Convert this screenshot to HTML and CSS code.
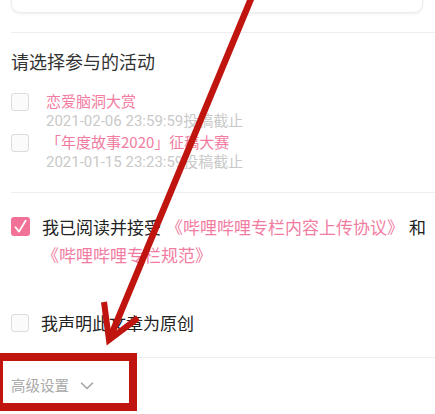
FILE: index.html
```html
<!DOCTYPE html>
<html lang="zh-CN">
<head>
<meta charset="utf-8">
<title>选择活动</title>
<link rel="stylesheet" href="styles.css">
</head>
<body>
<div class="page">
  <div class="card"></div>
  <div class="divider"></div>
  <div class="section-title">请选择参与的活动</div>
  <div class="activities">
    <div class="activity">
      <span class="box"></span>
      <div class="activity-text">
        <div class="activity-name">恋爱脑洞大赏</div>
        <div class="activity-date">2021-02-06 23:59:59投稿截止</div>
      </div>
    </div>
    <div class="activity">
      <span class="box"></span>
      <div class="activity-text">
        <div class="activity-name">「年度故事2020」征稿大赛</div>
        <div class="activity-date">2021-01-15 23:23:59投稿截止</div>
      </div>
    </div>
  </div>
  <div class="divider div-2"></div>
  <div class="agree">
    <span class="box checked">
      <svg viewBox="0 0 19 19" width="19" height="19"><path d="M4.5 10.2 L8 14.6 L14.6 3.8" fill="none" stroke="#fff" stroke-width="1.8" stroke-linecap="round" stroke-linejoin="round"/></svg>
    </span>
    <div class="agree-text">我已阅读并接受<span class="link">《哔哩哔哩专栏内容上传协议》</span>和 <span class="link first">《哔哩哔哩专栏规范》</span></div>
  </div>
  <div class="original">
    <span class="box"></span>
    <div class="original-text">我声明此文章为原创</div>
  </div>
  <div class="divider div-3"></div>
  <div class="advanced">
    <span>高级设置</span>
    <svg class="chev" viewBox="0 0 14 8" width="14" height="8"><polyline points="1.5,1.2 7,6.5 12.5,1.2" fill="none" stroke="#a8a8a8" stroke-width="1.6" stroke-linecap="round" stroke-linejoin="round"/></svg>
  </div>
</div>
<svg class="annot" viewBox="0 0 435 414" width="435" height="414">
  <line x1="253" y1="-6" x2="110" y2="338" stroke="#c0140e" stroke-width="6.5" stroke-linecap="butt"/>
  <polyline points="104,302 109,340 138,318" fill="none" stroke="#c0140e" stroke-width="6" stroke-linejoin="miter" stroke-miterlimit="10"/>
  <rect x="-1" y="357" width="134" height="50" fill="none" stroke="#c0140e" stroke-width="8"/>
</svg>
</body>
</html>
```
FILE: styles.css
```css
html, body {
  margin: 0;
  padding: 0;
  background: #fff;
}
body {
  width: 435px;
  height: 414px;
  overflow: hidden;
  position: relative;
  font-family: "Noto Sans CJK SC", "Noto Sans", sans-serif;
  color: #222;
}
.page {
  padding-left: 11px;
}
.card {
  width: 410px;
  height: 12px;
  border: 1px solid #ececec;
  border-top: none;
  border-radius: 0 0 9px 9px;
  box-shadow: 0 1px 3px rgba(0,0,0,0.07);
  background: #fff;
}
.divider {
  height: 1px;
  background: #eeeeee;
  margin-top: 19px;
}
.section-title {
  margin-top: 16px;
  font-size: 18px;
  line-height: 24px;
  color: #333;
}
.activities {
  margin-top: 18px;
  display: flex;
  flex-direction: column;
}
.activity {
  display: flex;
  align-items: flex-start;
  gap: 17px;
}
.box {
  flex: none;
  width: 16px;
  height: 16px;
  border: 1.5px solid #dcdcdc;
  border-radius: 3px;
  background: #fbfbfb;
  display: flex;
  align-items: center;
  justify-content: center;
}
.activity .box {
  margin-top: 2px;
}
.activity-name {
  font-size: 15px;
  line-height: 20px;
  color: #f27ca1;
}
.activity-date {
  font-family: "Roboto", "Noto Sans CJK SC", sans-serif;
  font-size: 15px;
  line-height: 21px;
  color: #c9c9c9;
}
.div-2 {
  margin-top: 19px;
}
.agree {
  margin-top: 20px;
  display: flex;
  align-items: flex-start;
  gap: 12px;
}
.box.checked {
  margin-top: 4px;
  width: 19px;
  height: 19px;
  border: none;
  background: #f27297;
}
.box.checked svg {
  display: block;
}
.agree-text {
  flex: 1;
  font-size: 17px;
  line-height: 28px;
  color: #222;
}
.link {
  color: #f27ca1;
  margin: 0 5px;
}
.link.first {
  margin-left: 0;
}
.original {
  margin-top: 40px;
  display: flex;
  align-items: flex-start;
  gap: 12px;
}
.original .box {
  margin-top: 5px;
}
.original-text {
  font-size: 17px;
  line-height: 28px;
  color: #222;
}
.div-3 {
  margin-top: 20px;
}
.advanced {
  margin-top: 16px;
  display: flex;
  align-items: center;
  gap: 11px;
  font-size: 14.5px;
  line-height: 22px;
  color: #a8a8a8;
}
.chev {
  display: block;
  margin-top: 1px;
}
.annot {
  position: absolute;
  left: 0;
  top: 0;
  pointer-events: none;
}
```
